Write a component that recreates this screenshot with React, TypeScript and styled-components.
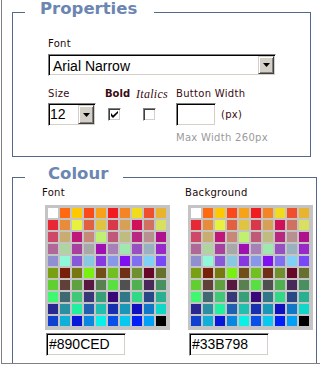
import React from 'react';
import styled, { createGlobalStyle } from 'styled-components';

const Global = createGlobalStyle`
  html, body { margin: 0; padding: 0; background: #ffffff; }
  body { font-family: "DejaVu Sans", Verdana, sans-serif; }
`;

const PALETTE: string[] = [
  '#ffffff', '#ff6a10', '#ffc800', '#fa4a1a', '#f8a21a', '#f01c20', '#f48424', '#f0dc1c', '#f04e2c', '#e8b430',
  '#e82834', '#e88c3c', '#e8f040', '#e06040', '#e0c440', '#d83848', '#d8a054', '#d01058', '#d07060', '#d8e060',
  '#d04868', '#c8ac70', '#c01878', '#c88878', '#c0f070', '#c05878', '#c0bc80', '#b82880', '#b89090', '#b0108c',
  '#b06898', '#b0d4a0', '#a840a0', '#a8a8a8', '#a010b0', '#a880b8', '#a0e8b0', '#9850c0', '#98b0c0', '#9828c8',
  '#9090d0', '#90f8d8', '#8858d8', '#88c8e0', '#8838e0', '#8898e8', '#8010f0', '#8070f0', '#80d0f8', '#7848f8',
  '#78a010', '#782008', '#787810', '#78f010', '#705018', '#70c020', '#703018', '#709030', '#680828', '#687030',
  '#60d030', '#604038', '#60a040', '#581840', '#588050', '#58e040', '#505050', '#50b050', '#482858', '#489060',
  '#40f870', '#406870', '#40c878', '#383878', '#38a078', '#380878', '#307888', '#30d888', '#284888', '#28b090',
  '#282890', '#2890a0', '#20f0a0', '#2060b0', '#20c0b0', '#1830b0', '#1898b8', '#1010c0', '#1078c8', '#10d8c8',
  '#1040d0', '#10b0d8', '#0818d8', '#0888e0', '#08f0e8', '#0850e8', '#08c8f0', '#0020f8', '#00a0f8', '#000000',
];

const Frame = styled.div`
  box-sizing: border-box;
  width: 319px;
  height: 364px;
  margin-left: 1px;
  border-left: 1px solid #808080;
  border-bottom: 1px solid #808080;
  overflow: hidden;
`;

const Group = styled.fieldset<{ $w: number; $top: number }>`
  box-sizing: border-box;
  width: ${p => p.$w}px;
  min-width: 0;
  margin: ${p => p.$top}px 0 0 10px;
  padding: 0;
  border: 1px solid #56688a;
`;

const Legend = styled.legend<{ $pl: number; $pr: number }>`
  margin-left: 12px;
  padding: 0 ${p => p.$pr}px 7px ${p => p.$pl}px;
  font-family: "DejaVu Sans", Verdana, sans-serif;
  font-weight: bold;
  font-size: 16.5px;
  line-height: 17px;
  color: #6b86b2;
`;

const Body = styled.div<{ $pad: string }>`
  padding: ${p => p.$pad};
`;

const Label = styled.div<{ $tone?: 'bold' | 'italic' | 'plain' }>`
  height: 12px;
  font-family: ${p => (p.$tone === 'italic' ? '"Liberation Serif", "Times New Roman", serif' : '"DejaVu Sans", Verdana, sans-serif')};
  font-size: ${p => (p.$tone === 'italic' ? '12px' : '10px')};
  font-weight: ${p => (p.$tone === 'bold' ? 'bold' : 'normal')};
  font-style: ${p => (p.$tone === 'italic' ? 'italic' : 'normal')};
  letter-spacing: ${p => (p.$tone === 'bold' ? '0' : '0.3px')};
  line-height: 12px;
  color: ${p => (p.$tone === 'plain' ? '#1a0808' : '#3a0a10')};
  white-space: nowrap;
`;

const SelectBox = styled.div<{ $w: number }>`
  box-sizing: border-box;
  display: flex;
  align-items: stretch;
  width: ${p => p.$w}px;
  height: 22px;
  background: #ffffff;
  border-top: 1px solid #808080;
  border-left: 1px solid #808080;
  border-right: 1px solid #ffffff;
  border-bottom: 1px solid #ffffff;
  box-shadow: inset 1px 1px 0 #000000, inset -1px -1px 0 #d4d0c8;
  padding: 1px;
`;

const SmallSelect = styled(SelectBox)`
  height: 23px;
`;

const SelectText = styled.div<{ $pl: number; $pt: number }>`
  flex: 1;
  padding: ${p => p.$pt}px 0 0 ${p => p.$pl}px;
  font-family: "Liberation Sans", Arial, sans-serif;
  font-size: 14px;
  line-height: 18px;
  color: #000000;
  white-space: nowrap;
  overflow: hidden;
`;

const DropButton = styled.div`
  box-sizing: border-box;
  width: 16px;
  display: flex;
  align-items: center;
  justify-content: center;
  background: #d4d0c8;
  border-top: 1px solid #d4d0c8;
  border-left: 1px solid #d4d0c8;
  border-right: 1px solid #404040;
  border-bottom: 1px solid #404040;
  box-shadow: inset 1px 1px 0 #ffffff, inset -1px -1px 0 #808080;
`;

const Arrow = () => (
  <svg width="7" height="4" viewBox="0 0 7 4" aria-hidden="true">
    <path d="M0 0h7L3.5 4z" fill="#000000" />
  </svg>
);

const Gap = styled.div<{ $h: number }>`
  height: ${p => p.$h}px;
`;

const ControlRow = styled.div`
  display: flex;
  align-items: flex-start;
`;

const Column = styled.div<{ $w?: number }>`
  display: flex;
  flex-direction: column;
  width: ${p => (p.$w ? `${p.$w}px` : 'auto')};
  flex: none;
`;

const ControlSlot = styled.div<{ $pl?: number }>`
  display: flex;
  align-items: center;
  height: 23px;
  margin-top: 3px;
  padding-left: ${p => p.$pl ?? 0}px;
`;

const CheckBox = styled.span`
  box-sizing: border-box;
  display: inline-flex;
  align-items: center;
  justify-content: center;
  width: 13px;
  height: 13px;
  background: #ffffff;
  border-top: 1px solid #808080;
  border-left: 1px solid #808080;
  border-right: 1px solid #ffffff;
  border-bottom: 1px solid #ffffff;
  box-shadow: inset 1px 1px 0 #404040, inset -1px -1px 0 #d4d0c8;
`;

const Tick = () => (
  <svg width="7" height="7" viewBox="0 0 7 7" aria-hidden="true">
    <path d="M0 2v3l2 2 5-5V0L2 4.5z" fill="#000000" />
  </svg>
);

const TextBox = styled.div<{ $w: number; $ml?: number }>`
  box-sizing: border-box;
  width: ${p => p.$w}px;
  height: 23px;
  margin-left: ${p => p.$ml ?? 0}px;
  background: #ffffff;
  border-top: 1px solid #808080;
  border-left: 1px solid #808080;
  border-right: 1px solid #ffffff;
  border-bottom: 1px solid #ffffff;
  box-shadow: inset 1px 1px 0 #000000, inset -1px -1px 0 #d4d0c8;
  padding: 1px 1px 1px 2px;
  font-family: "Liberation Sans", Arial, sans-serif;
  font-size: 14px;
  line-height: 19px;
  color: #000000;
  white-space: nowrap;
`;

const Unit = styled.span`
  margin-left: 5px;
  font-family: "DejaVu Sans", Verdana, sans-serif;
  font-size: 10px;
  letter-spacing: 0.3px;
  color: #3a0a10;
`;

const Hint = styled.div`
  margin-top: 6px;
  height: 12px;
  font-family: "DejaVu Sans", Verdana, sans-serif;
  font-size: 10px;
  line-height: 12px;
  letter-spacing: 0.3px;
  color: #9a9a9a;
  white-space: nowrap;
`;

const ColourRow = styled.div<{ $mt: number }>`
  display: flex;
  align-items: flex-start;
  margin-top: ${p => p.$mt}px;
`;

const Swatches = styled.div`
  display: grid;
  grid-template-columns: repeat(10, 10px);
  grid-auto-rows: 10px;
  gap: 2px;
  width: max-content;
  margin: 6px 0 0 3px;
  padding: 3px 4px 4px 3px;
  background: #c4c4c4;
`;

const Swatch = styled.div`
  width: 10px;
  height: 10px;
`;

const HexRow = styled.div`
  margin-top: 3px;
`;

const ColourPicker = ({ label, value, width }: { label: string; value: string; width: number }) => (
  <Column $w={width}>
    <Label $tone="plain">{label}</Label>
    <Swatches>
      {PALETTE.map((c, i) => (
        <Swatch key={i} style={{ background: c }} />
      ))}
    </Swatches>
    <HexRow>
      <TextBox $w={80} $ml={4}>{value}</TextBox>
    </HexRow>
  </Column>
);

export default function App() {
  return (
    <>
      <Global />
      <Frame>
        <Group $w={299} $top={0}>
          <Legend $pl={15} $pr={17}>Properties</Legend>
          <Body $pad="14px 0 12px 35px">
            <Label $tone="plain">Font</Label>
            <Gap $h={4} />
            <SelectBox $w={228}>
              <SelectText $pl={3} $pt={1}>Arial Narrow</SelectText>
              <DropButton>
                <Arrow />
              </DropButton>
            </SelectBox>
            <Gap $h={12} />
            <ControlRow>
              <Column $w={57}>
                <Label>Size</Label>
                <ControlSlot>
                  <SmallSelect $w={48}>
                    <SelectText $pl={0} $pt={0}>12</SelectText>
                    <DropButton>
                      <Arrow />
                    </DropButton>
                  </SmallSelect>
                </ControlSlot>
              </Column>
              <Column $w={31}>
                <Label $tone="bold">Bold</Label>
                <ControlSlot $pl={3}>
                  <CheckBox>
                    <Tick />
                  </CheckBox>
                </ControlSlot>
              </Column>
              <Column $w={40}>
                <Label $tone="italic">Italics</Label>
                <ControlSlot $pl={7}>
                  <CheckBox />
                </ControlSlot>
              </Column>
              <Column>
                <Label>Button Width</Label>
                <ControlSlot>
                  <TextBox $w={40} />
                  <Unit>(px)</Unit>
                </ControlSlot>
                <Hint>Max Width 260px</Hint>
              </Column>
            </ControlRow>
          </Body>
        </Group>
        <Group $w={305} $top={8}>
          <Legend $pl={23} $pr={15}>Colour</Legend>
          <Body $pad="0 0 12px 29px">
            <ColourRow $mt={-2}>
              <ColourPicker label="Font" value="#890CED" width={143} />
              <ColourPicker label="Background" value="#33B798" width={130} />
            </ColourRow>
          </Body>
        </Group>
      </Frame>
    </>
  );
}
